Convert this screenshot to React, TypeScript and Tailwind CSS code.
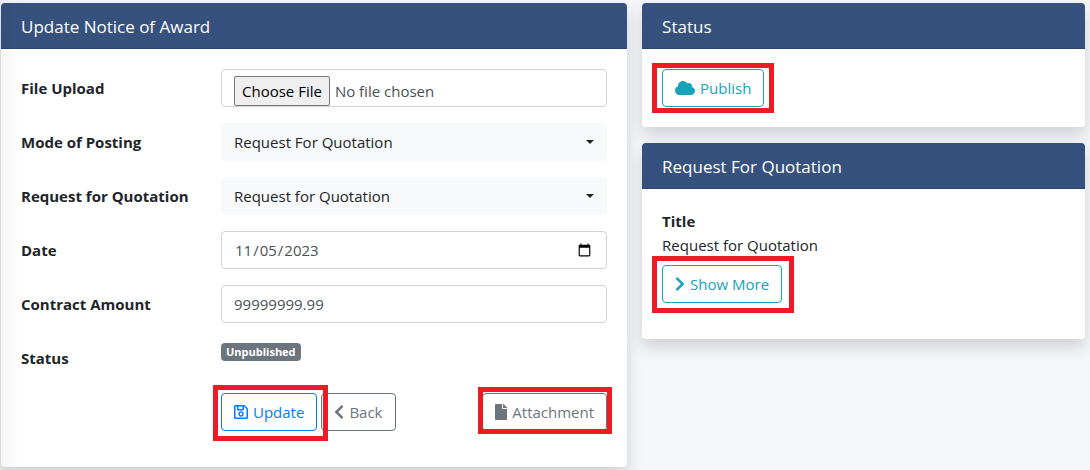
import { useState } from 'react';
import type { ReactNode } from 'react';
import { FaChevronLeft, FaChevronRight, FaCloud, FaFile, FaRegSave } from 'react-icons/fa';

interface CardProps {
  title: string;
  children: ReactNode;
}

function Card({ title, children }: CardProps) {
  return (
    <section className="rounded bg-white shadow-[0_8px_16px_rgba(0,0,0,0.15)]">
      <h2 className="rounded-t border-b border-[#2b4470] bg-[#36517e] px-5 pt-3 pb-[9px] text-[17px] leading-6 text-white">
        {title}
      </h2>
      <div className="p-5">{children}</div>
    </section>
  );
}

interface FieldProps {
  id: string;
  label: string;
  children: ReactNode;
}

function Field({ id, label, children }: FieldProps) {
  return (
    <div className="mb-4 flex min-h-[38px]">
      <label htmlFor={id} className="w-[200px] shrink-0 pt-[7px] leading-6 font-bold">
        {label}
      </label>
      <div className="min-w-0 flex-1">{children}</div>
    </div>
  );
}

interface SelectProps {
  id: string;
  options: string[];
}

function Select({ id, options }: SelectProps) {
  return (
    <div className="relative">
      <select
        id={id}
        className="block h-[38px] w-full appearance-none rounded bg-[#f8f9fa] px-[13px] text-[#212529]"
      >
        {options.map((option) => (
          <option key={option}>{option}</option>
        ))}
      </select>
      <span className="pointer-events-none absolute top-[17px] right-[13px] border-x-4 border-t-4 border-x-transparent border-t-[#212529]" />
    </div>
  );
}

interface ActionButtonProps {
  icon: ReactNode;
  label: string;
  variant: 'primary' | 'secondary' | 'info';
}

const variants = {
  primary: 'border-[#007bff] text-[#007bff]',
  secondary: 'border-[#6c757d] text-[#6c757d]',
  info: 'border-[#17a2b8] text-[#17a2b8]',
};

function ActionButton({ icon, label, variant }: ActionButtonProps) {
  return (
    <button
      type="button"
      className={`flex h-[38px] items-center gap-[5px] rounded border px-3 leading-6 ${variants[variant]}`}
    >
      {icon}
      {label}
    </button>
  );
}

// Red frame drawn around a button to point it out
function Highlight({ frame, children }: { frame: string; children: ReactNode }) {
  return (
    <div className="relative w-fit">
      {children}
      <span className={`pointer-events-none absolute z-10 border-[5px] border-[#ed1c24] ${frame}`} />
    </div>
  );
}

export default function App() {
  const [date, setDate] = useState('2023-11-05');
  const [amount, setAmount] = useState('99999999.99');

  return (
    <main className="relative grid min-h-screen grid-cols-12 items-start gap-[15px] overflow-hidden bg-[#f4f6f9] pt-[3px] pr-[5px] pb-[3px] pl-px font-['Open_Sans','Noto_Sans',sans-serif] text-[15px] text-[#212529]">
      {/* Shade along the left edge of the page */}
      <span className="pointer-events-none absolute inset-y-0 left-0 z-10 w-5 bg-linear-to-r from-black/4 to-transparent" />

      <div className="col-span-7">
        <Card title="Update Notice of Award">
          <form>
            <Field id="file" label="File Upload">
              <input
                id="file"
                type="file"
                className="block h-[38px] w-full overflow-hidden rounded border border-[#ced4da] px-3 pt-[6px] text-[#495057] file:mr-[5px] file:h-[30px] file:rounded-xs file:border file:border-[#767676] file:bg-[#efefef] file:px-[7px] file:text-black"
              />
            </Field>
            <Field id="mode" label="Mode of Posting">
              <Select id="mode" options={['Request For Quotation']} />
            </Field>
            <Field id="rfq" label="Request for Quotation">
              <Select id="rfq" options={['Request for Quotation']} />
            </Field>
            <Field id="date" label="Date">
              <input
                id="date"
                type="date"
                value={date}
                onChange={(e) => setDate(e.target.value)}
                className="block h-[38px] w-full rounded border border-[#ced4da] px-3 text-[#495057]"
              />
            </Field>
            <Field id="amount" label="Contract Amount">
              <input
                id="amount"
                type="text"
                value={amount}
                onChange={(e) => setAmount(e.target.value)}
                className="block h-[38px] w-full rounded border border-[#ced4da] px-3 text-[#495057]"
              />
            </Field>
            <Field id="status" label="Status">
              <output
                id="status"
                className="mt-1 block w-fit rounded bg-[#6c757d] px-[5px] text-[11px] leading-[18px] font-bold text-white"
              >
                Unpublished
              </output>
            </Field>
            <div className="mb-4 ml-[200px] flex items-center">
              <Highlight frame="-top-2 -right-[11px] -bottom-[10px] -left-2">
                <ActionButton
                  variant="primary"
                  label="Update"
                  icon={<FaRegSave className="h-4 w-[14px]" />}
                />
              </Highlight>
              <div className="ml-1">
                <ActionButton
                  variant="secondary"
                  label="Back"
                  icon={<FaChevronLeft className="h-4 w-[10px]" />}
                />
              </div>
              <div className="ml-auto">
                <Highlight frame="-top-[6px] -right-[5px] -bottom-[3px] -left-1">
                  <ActionButton
                    variant="secondary"
                    label="Attachment"
                    icon={<FaFile className="h-4 w-3" />}
                  />
                </Highlight>
              </div>
            </div>
          </form>
        </Card>
      </div>

      <div className="col-span-5 space-y-4">
        <Card title="Status">
          <Highlight frame="-inset-x-[10px] -inset-y-[6px]">
            <ActionButton
              variant="info"
              label="Publish"
              icon={<FaCloud className="h-4 w-5" />}
            />
          </Highlight>
        </Card>
        <Card title="Request For Quotation">
          <dl className="mb-2 leading-6">
            <dt className="font-bold">Title</dt>
            <dd>Request for Quotation</dd>
          </dl>
          <div className="mb-4">
            <Highlight frame="-top-[9px] -right-3 -bottom-[10px] -left-[10px]">
              <ActionButton
                variant="info"
                label="Show More"
                icon={<FaChevronRight className="h-4 w-[10px]" />}
              />
            </Highlight>
          </div>
        </Card>
      </div>
    </main>
  );
}
